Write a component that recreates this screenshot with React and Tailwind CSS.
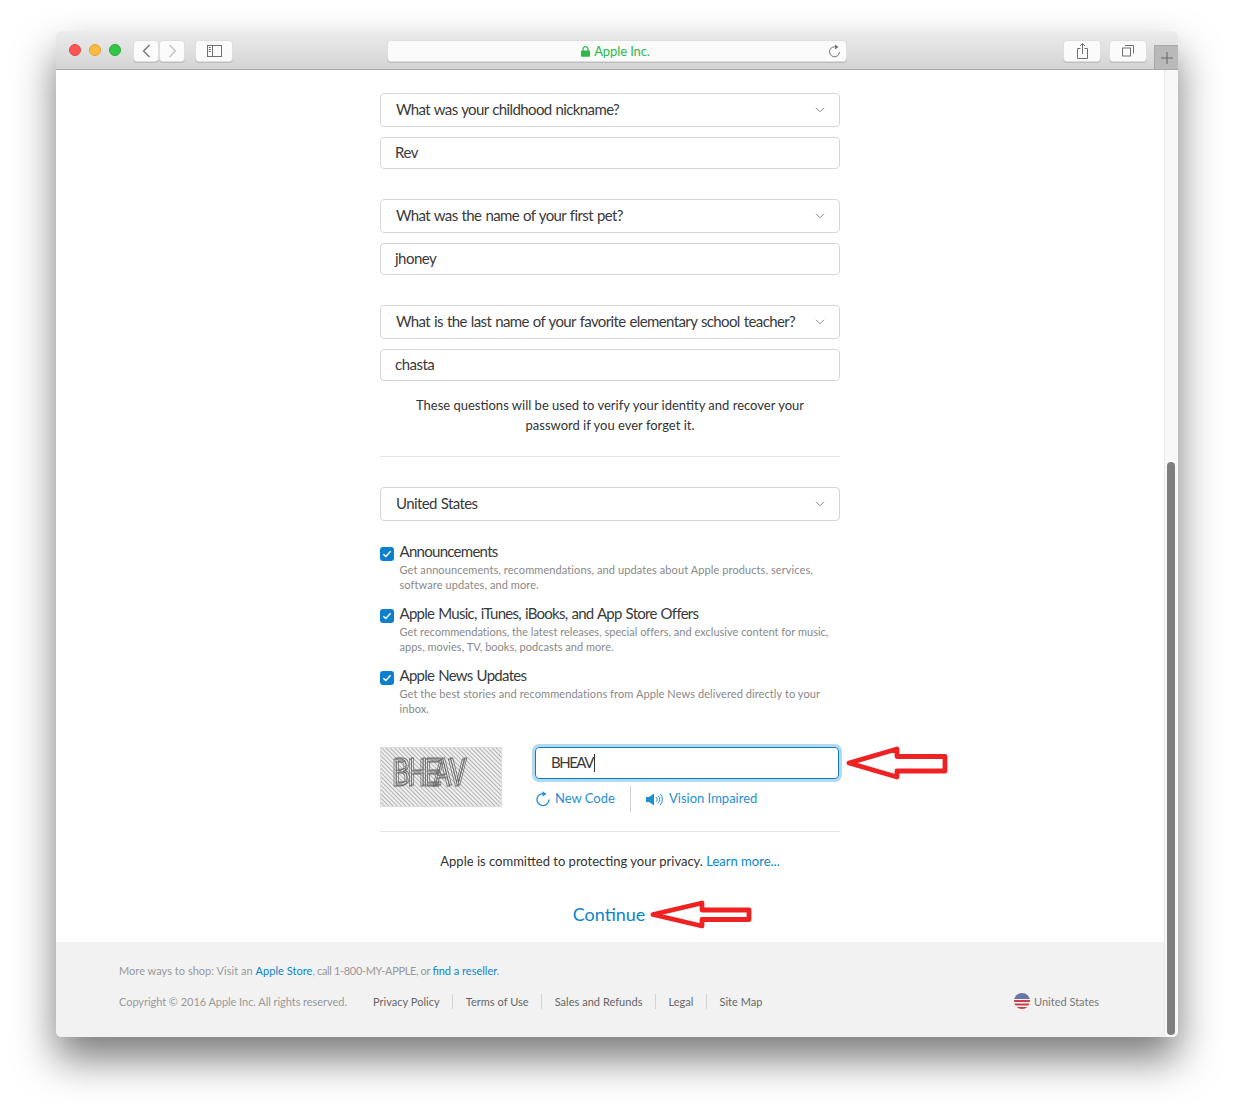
import React from "react";

const font = { fontFamily: 'Lato, "Open Sans", sans-serif' };

function Select({ children }) {
  return (
    <div className="h-[34px] border border-[#d6d6d6] rounded-[4px] flex items-center justify-between pl-[15px] pr-[14px] text-[#3a3a3a] text-[15px] leading-[30px] pb-[2px] whitespace-nowrap tracking-[-0.62px] [word-spacing:0.8px]">
      <span>{children}</span>
      <svg className="mt-[2px]" width="10" height="6" viewBox="0 0 10 6" fill="none" stroke="#888" strokeWidth="1"><path d="M1 .8 5 4.8 9 .8" /></svg>
    </div>
  );
}
function Input({ children }) {
  return (
    <div className="h-[32px] mt-[10px] border border-[#d6d6d6] rounded-[4px] flex items-center pl-[14px] pb-[1px] text-[#3a3a3a] text-[15px] tracking-[-0.5px]">
      {children}
    </div>
  );
}
function Check({ title, a, b, track }) {
  return (
    <div className="flex h-[62px]">
      <div className="w-[14px] h-[14px] mt-[6px] mr-[5.5px] rounded-[3px] bg-[#0e7fcc] flex items-center justify-center shrink-0">
        <svg width="10" height="8" viewBox="0 0 10 8" fill="none" stroke="#fff" strokeWidth="1.4"><path d="M1.3 4.2 3.8 6.4 8.6 1.2" /></svg>
      </div>
      <div>
        <div className="text-[15px] leading-[20px] text-[#3a3a3a] tracking-[-0.72px] [word-spacing:0.8px]">{title}</div>
        <div className={"text-[11px] leading-[15px] pt-[1px] text-[#888] whitespace-nowrap " + track}>{a}<br />{b}</div>
      </div>
    </div>
  );
}
function Arrow({ className, w, h, points }) {
  return (
    <svg className={className} width={w} height={h} viewBox={`0 0 ${w} ${h}`}>
      <polygon points={points} fill="none" stroke="#ee2222" strokeWidth="4.8" strokeLinejoin="round" />
    </svg>
  );
}
function Sep() {
  return <span className="w-px h-[15px] bg-[#d2d2d2] mx-[12.5px]" />;
}
const btn = "h-[22px] mt-[9px] rounded-[4px] bg-[#fbfbfb] border border-[#dedede] shadow-[0_1px_0_rgba(0,0,0,0.12)] flex items-center justify-center";

export default function App() {
  return (
    <div className="w-[1234px] h-[1117px] bg-white pt-[31px] pl-[56px] overflow-hidden relative" style={font}>
      <div className="w-[1122px] h-[1006px] rounded-[6px] overflow-hidden flex flex-col shadow-[0_22px_40px_rgba(0,0,0,0.52)]">
        {/* titlebar */}
        <div className="h-[39px] shrink-0 relative flex items-start border-b border-[#a9a9a9] bg-gradient-to-b from-[#ececec] to-[#d4d4d4]">
          <div className="flex gap-[8px] ml-[13px] mt-[13px]">
            <span className="w-[12px] h-[12px] rounded-full bg-[#fc5753] border border-[#df4744]" />
            <span className="w-[12px] h-[12px] rounded-full bg-[#fdbc40] border border-[#de9f34]" />
            <span className="w-[12px] h-[12px] rounded-full bg-[#33c748] border border-[#27aa35]" />
          </div>
          <div className="flex ml-[12px]">
            <div className={btn + " w-[26px]"}>
              <svg width="9" height="14" viewBox="0 0 9 14" fill="none" stroke="#707070" strokeWidth="1.3"><path d="M7.5 1 1.5 7l6 6" /></svg>
            </div>
            <div className={btn + " w-[26px] bg-[#f6f6f6]"}>
              <svg width="9" height="14" viewBox="0 0 9 14" fill="none" stroke="#c0c0c0" strokeWidth="1.3"><path d="M1.5 1l6 6-6 6" /></svg>
            </div>
          </div>
          <div className={btn + " w-[38px] ml-[10px]"}>
            <svg width="15" height="12" viewBox="0 0 15 12" fill="none" stroke="#707070" strokeWidth="1"><rect x=".5" y=".5" width="14" height="11" /><path d="M5.5 .5v11M1.8 2.5h2M1.8 4.5h2M1.8 6.5h2" /></svg>
          </div>
          <div className={btn + " w-[460px] ml-[154px] relative text-[13px] text-[#2db84a] pt-[1px] pr-[3px] tracking-[-0.1px]"}>
            <svg className="mr-[4px]" width="9" height="11" viewBox="0 0 9 11"><path d="M2 5V3.2a2.5 2.5 0 0 1 5 0V5" fill="none" stroke="#2db84a" strokeWidth="1.2" /><rect y="4.6" width="9" height="6.2" rx="1" fill="#2db84a" /></svg>
            Apple Inc.
            <svg className="absolute right-[5px] top-[3px]" width="13" height="14" viewBox="0 0 13 14" fill="none" stroke="#707070" strokeWidth="1"><path d="M8.5 3.2A5 5 0 1 0 11.5 8" /><path d="M7 .6 10.4 3 7 5.4z" fill="#707070" stroke="none" /></svg>
          </div>
          <div className={btn + " w-[38px] ml-[216px]"}>
            <svg width="11" height="16" viewBox="0 0 11 16" fill="none" stroke="#707070" strokeWidth="1"><path d="M3.5 5.5H.5v10h10v-10h-3M5.5 11V.8M3 3l2.5-2.5L8 3" /></svg>
          </div>
          <div className={btn + " w-[38px] ml-[8px]"}>
            <svg width="12" height="12" viewBox="0 0 12 12" fill="none" stroke="#707070" strokeWidth="1"><rect x=".5" y="3" width="8" height="8" /><path d="M3 .5h8.5v8" /></svg>
          </div>
          <div className="absolute right-0 bottom-0 w-[24px] h-[24px] bg-[#b9b9b9] border-l border-t border-[#a9a9a9] flex items-center justify-center">
            <svg width="12" height="12" viewBox="0 0 12 12" stroke="#666" strokeWidth="1"><path d="M6 0v12M0 6h12" /></svg>
          </div>
        </div>

        {/* body */}
        <div className="flex flex-1 min-h-0 bg-white">
          <div className="flex-1 flex flex-col min-w-0">
            <div className="flex-1 w-[460px] mx-auto pt-[23px]">
              <Select>What was your childhood nickname?</Select>
              <Input>Rev</Input>
              <div className="h-[30px]" />
              <Select>What was the name of your first pet?</Select>
              <Input>jhoney</Input>
              <div className="h-[30px]" />
              <Select>What is the last name of your favorite elementary school teacher?</Select>
              <Input>chasta</Input>
              <p className="text-[13px] leading-[20px] text-center text-[#333] mt-[14px]">
                These questions will be used to verify your identity and recover your<br />password if you ever forget it.
              </p>
              <div className="h-px bg-[#e5e5e5] mt-[21px] mb-[30px]" />
              <Select>United States</Select>
              <div className="h-[20px]" />
              <Check track="tracking-[0.09px]" title="Announcements" a="Get announcements, recommendations, and updates about Apple products, services," b="software updates, and more." />
              <Check track="tracking-[0.02px]" title="Apple Music, iTunes, iBooks, and App Store Offers" a="Get recommendations, the latest releases, special offers, and exclusive content for music," b="apps, movies, TV, books, podcasts and more." />
              <Check track="tracking-[0.08px]" title="Apple News Updates" a="Get the best stories and recommendations from Apple News delivered directly to your" b="inbox." />
              <div className="flex h-[60px] mt-[20px]">
                <svg width="122" height="60" viewBox="0 0 122 60" className="shrink-0">
                  <defs>
                    <pattern id="st" width="3" height="3" patternUnits="userSpaceOnUse" patternTransform="rotate(-45)">
                      <rect width="3" height="3" fill="#efefef" />
                      <rect width="1" height="3" fill="#b4b4b4" />
                    </pattern>
                    <filter id="dbl" x="-10%" y="-10%" width="120%" height="120%">
                      <feOffset in="SourceGraphic" dx="1.6" dy="-1.2" result="o" />
                      <feMerge><feMergeNode in="o" /><feMergeNode in="SourceGraphic" /></feMerge>
                    </filter>
                  </defs>
                  <rect x=".5" y=".5" width="121" height="59" fill="url(#st)" stroke="#dddddd" />
                  <g filter="url(#dbl)">
                    <text transform="translate(12,39) scale(0.64,1)" x="0 24 49 64 88" fill="none" stroke="#666666" strokeWidth="1" fontFamily="Liberation Sans" fontSize="39">BHEAV</text>
                  </g>
                </svg>
                <div className="ml-[33px] w-[304px]">
                  <div className="h-[32px] rounded-[4px] border border-[#0a7fc9] shadow-[0_0_0_3px_rgba(110,180,225,0.5)] flex items-center pl-[15px] pb-[1px] text-[15px] text-[#3a3a3a] tracking-[-1.5px]">
                    BHEAV<span className="w-px h-[18px] bg-[#333] ml-[1.5px]" />
                  </div>
                  <div className="flex items-center h-[28px] mt-[6px] text-[13px] text-[#1f8fd4]">
                    <svg className="ml-[1px] mr-[5px]" width="14" height="16" viewBox="0 0 14 16" fill="none" stroke="#1f8fd4" strokeWidth="1.3"><path d="M9.5 3.2A6 6 0 1 0 13 8.5" /><path d="M6.5.2 10.5 3 6.5 5.5z" fill="#1f8fd4" stroke="none" /></svg>
                    <span className="w-[75px]">New Code</span>
                    <span className="w-px h-[26px] bg-[#d2d2d2]" />
                    <svg className="ml-[15px] mr-[4px]" width="19" height="13" viewBox="0 0 19 13" fill="none" stroke="#1f8fd4" strokeWidth="1"><path d="M0 4h3l5-3.5v12L3 9H0z" fill="#1f8fd4" stroke="none" /><path d="M10 4.2a3 3 0 0 1 0 4.6M12 2.6a5.4 5.4 0 0 1 0 7.8M14.2 1a8 8 0 0 1 0 11" /></svg>
                    <span>Vision Impaired</span>
                  </div>
                </div>
              </div>
              <div className="h-px bg-[#e5e5e5] mt-[24px]" />
              <p className="text-[13px] leading-[20px] text-center text-[#333] mt-[19px]">
                Apple is committed to protecting your privacy. <span className="text-[#0a84cc]">Learn more...</span>
              </p>
              <p className="text-[18px] leading-[26px] text-center text-[#0a84cc] mt-[30px] pr-[2px]">Continue</p>
            </div>
            {/* footer */}
            <div className="h-[95px] shrink-0 bg-[#f2f2f2] pl-[63px] pr-[65px] pt-[21px] text-[11px] text-[#999]">
              <div className="leading-[15px]">
                <span className="tracking-[0.03px]">More ways to shop: Visit an </span>
                <span className="text-[#0a84cc] tracking-[0.05px]">Apple Store</span>
                <span className="tracking-[-0.35px]">, call 1-800-MY-APPLE, or </span>
                <span className="text-[#0a84cc]">find a reseller</span>.
              </div>
              <div className="flex items-center mt-[15px] leading-[15px]">
                <span className="tracking-[-0.05px]">Copyright © 2016 Apple Inc. All rights reserved.</span>
                <div className="flex items-center ml-[26px] text-[#666] tracking-[0.03px]">
                  <span>Privacy Policy</span><Sep /><span>Terms of Use</span><Sep /><span>Sales and Refunds</span><Sep /><span>Legal</span><Sep /><span>Site Map</span>
                </div>
                <div className="ml-auto flex items-center text-[#777]">
                  <svg className="mr-[4px]" width="16" height="16" viewBox="0 0 16 16">
                    <defs><clipPath id="fl"><circle cx="8" cy="8" r="8" /></clipPath></defs>
                    <g clipPath="url(#fl)">
                      <rect width="16" height="16" fill="#f4f4f4" />
                      <rect y="7" width="16" height="2" fill="#c8404a" />
                      <rect y="10.5" width="16" height="2" fill="#c8404a" />
                      <rect y="14" width="16" height="2" fill="#c8404a" />
                      <rect width="16" height="6" fill="#6a76a8" />
                    </g>
                  </svg>
                  United States
                </div>
              </div>
            </div>
          </div>
          {/* scrollbar */}
          <div className="w-[14px] shrink-0 bg-[#f8f8f8] border-l border-[#e8e8e8] flex flex-col justify-end pl-[2px] pb-[2px]">
            <div className="w-[8px] h-[573px] rounded-full bg-[#7f7f7f]" />
          </div>
        </div>
      </div>
      <Arrow className="absolute left-[844px] top-[745px]" w={105} h={36} points="5,18 53,4 53,11.5 101,11.5 101,26 53,26 53,32" />
      <Arrow className="absolute left-[650px] top-[899px]" w={103} h={31} points="3,15.5 52,4 52,11 99,11 99,20.5 52,20.5 52,27" />
    </div>
  );
}
